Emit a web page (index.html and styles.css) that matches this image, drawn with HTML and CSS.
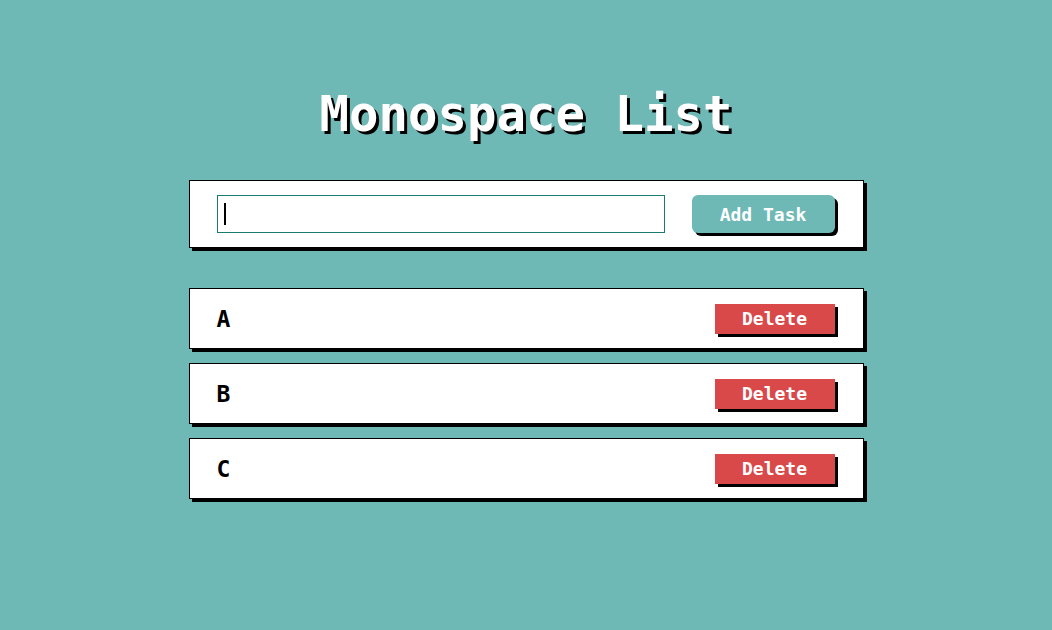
FILE: index.html
```html
<!DOCTYPE html>
<html>
<head>
<meta charset="utf-8">
<link rel="stylesheet" href="styles.css">
</head>
<body>
<main class="app">
  <h1 class="title">Monospace List</h1>
  <form class="entry" onsubmit="return false">
    <div class="input-wrap">
      <input class="entry-input" type="text">
      <span class="caret"></span>
    </div>
    <button class="add-btn" type="button">Add Task</button>
  </form>
  <ul class="tasks">
    <li class="task"><span class="task-name">A</span><button class="del-btn" type="button">Delete</button></li>
    <li class="task"><span class="task-name">B</span><button class="del-btn" type="button">Delete</button></li>
    <li class="task"><span class="task-name">C</span><button class="del-btn" type="button">Delete</button></li>
  </ul>
</main>
</body>
</html>
```
FILE: styles.css
```css
html, body {
  margin: 0;
  padding: 0;
}
body {
  background: #6eb9b6;
  font-family: "DejaVu Sans Mono", monospace;
  height: 630px;
}
.app {
  width: 675px;
  margin: 0 auto;
  padding-top: 84px;
}
.title {
  margin: 0 0 34px;
  text-align: center;
  color: #fff;
  font-size: 49px;
  font-weight: bold;
  line-height: 62px;
  text-shadow: 3px 3px 0 #000;
}
.entry {
  box-sizing: border-box;
  display: flex;
  align-items: center;
  gap: 27px;
  margin: 0 0 40px;
  padding: 14px 28px 14px 27px;
  background: #fff;
  border: 1px solid #000;
  box-shadow: 3px 3px 0 #000;
  height: 68px;
}
.input-wrap {
  flex: 1;
  position: relative;
  height: 38px;
}
.entry-input {
  display: block;
  width: 100%;
  box-sizing: border-box;
  height: 38px;
  margin: 0;
  border: 1px solid #1a7a72;
  outline: none;
  font-family: inherit;
  font-size: 20px;
  padding: 0 6px;
}
.caret {
  position: absolute;
  left: 7px;
  top: 8px;
  width: 2px;
  height: 22px;
  background: #000;
}
.add-btn {
  box-sizing: border-box;
  width: 143px;
  height: 38px;
  border: none;
  border-radius: 6px;
  background: #6eb9b6;
  color: #fff;
  font-family: inherit;
  font-size: 18px;
  font-weight: bold;
  box-shadow: 3px 3px 0 #000;
  padding: 0;
}
.tasks {
  list-style: none;
  margin: 0;
  padding: 0;
  display: flex;
  flex-direction: column;
  gap: 14px;
}
.task {
  box-sizing: border-box;
  height: 61px;
  display: flex;
  align-items: center;
  justify-content: space-between;
  padding: 0 28px 0 27px;
  background: #fff;
  border: 1px solid #000;
  box-shadow: 3px 3px 0 #000;
}
.task-name {
  font-size: 23px;
  font-weight: bold;
  color: #000;
}
.del-btn {
  width: 120px;
  height: 30px;
  border: none;
  border-radius: 0;
  background: #d9494a;
  color: #fff;
  font-family: inherit;
  font-size: 18px;
  font-weight: bold;
  padding: 0;
  box-shadow: 3px 3px 0 #000;
}
```
